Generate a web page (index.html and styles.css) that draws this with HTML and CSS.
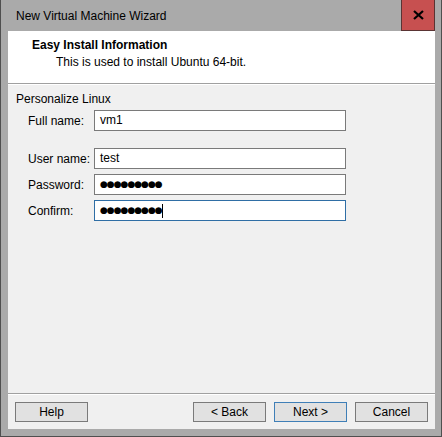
FILE: index.html
```html
<!DOCTYPE html>
<html lang="en">
<head>
<meta charset="utf-8">
<title>New Virtual Machine Wizard</title>
<link rel="stylesheet" href="styles.css">
</head>
<body>
<div class="window">
  <div class="titlebar">
    <span class="title">New Virtual Machine Wizard</span>
    <button class="close" aria-label="Close">
      <svg width="11" height="10" viewBox="0 0 11 10"><path d="M1 1 L10 9 M10 1 L1 9" stroke="#000" stroke-width="2.2" fill="none"/></svg>
    </button>
  </div>
  <div class="client">
    <div class="header">
      <div class="h-title">Easy Install Information</div>
      <div class="h-sub">This is used to install Ubuntu 64-bit.</div>
    </div>
    <div class="body">
      <div class="group-label">Personalize Linux</div>
      <div class="row">
        <span class="label">Full name:</span>
        <div class="field"><span>vm1</span></div>
      </div>
      <div class="row spaced">
        <span class="label">User name:</span>
        <div class="field"><span>test</span></div>
      </div>
      <div class="row">
        <span class="label">Password:</span>
        <div class="field dots"><span>●●●●●●●●●</span></div>
      </div>
      <div class="row">
        <span class="label">Confirm:</span>
        <div class="field dots focus"><span>●●●●●●●●●</span><span class="caret"></span></div>
      </div>
    </div>
    <div class="footer">
      <button class="btn">Help</button>
      <div class="spacer"></div>
      <button class="btn">&lt; Back</button>
      <button class="btn default">Next &gt;</button>
      <button class="btn">Cancel</button>
    </div>
  </div>
</div>
</body>
</html>
```
FILE: styles.css
```css
* { box-sizing: border-box; }
html, body { margin: 0; padding: 0; }
body {
  font-family: "Liberation Sans", Arial, sans-serif;
  font-size: 12px;
  color: #000;
  background: #ffffff;
}
.window {
  width: 442px;
  height: 437px;
  background: #aaaaaa;
  border: 1px solid #4f4f4f;
  border-top: none;
  display: flex;
  flex-direction: column;
}
.titlebar {
  height: 31px;
  display: flex;
  align-items: flex-start;
  justify-content: space-between;
  padding: 0 6px 0 15px;
  flex: none;
}
.title {
  font-size: 12px;
  line-height: 15px;
  padding-top: 9px;
  color: #000;
}
.close {
  width: 34px;
  height: 31px;
  margin: 0;
  padding: 0;
  background: #c75050;
  border: 1px solid #5a3434;
  border-top: none;
  display: flex;
  align-items: center;
  justify-content: center;
}
.client {
  flex: 1;
  margin: 0 6px 7px 7px;
  background: #f0f0f0;
  display: flex;
  flex-direction: column;
}
.header {
  height: 53px;
  background: #fff;
  border-bottom: 1px solid #a0a0a0;
  box-shadow: 0 1px 0 #fff;
  padding: 7px 0 0 24px;
  flex: none;
}
.h-title {
  font-weight: bold;
  line-height: 15px;
}
.h-sub {
  line-height: 15px;
  padding-left: 24px;
  margin-top: 2px;
}
.body {
  flex: 1;
  padding: 8px 0 0 8px;
  border-bottom: 1px solid #a0a0a0;
}
.group-label {
  line-height: 15px;
  margin-bottom: 3px;
}
.row {
  display: flex;
  align-items: center;
  height: 21px;
  margin-bottom: 5px;
  padding-left: 12px;
}
.row.spaced { margin-top: 17px; }
.label {
  width: 66px;
  flex: none;
}
.field {
  width: 252px;
  height: 21px;
  background: #fff;
  border: 1px solid #7a7a7a;
  padding: 0 5px;
  display: flex;
  align-items: center;
  line-height: 15px;
}
.field.focus { border-color: #2f6ea5; }
.dots span:first-child {
  font-family: "DejaVu Sans", sans-serif;
  font-size: 9px;
  letter-spacing: -1px;
}
.caret {
  width: 1px;
  height: 14px;
  background: #000;
  margin-left: 0;
}
.footer {
  height: 35px;
  flex: none;
  display: flex;
  align-items: flex-start;
  gap: 8px;
  padding: 7px 7px 0 7px;
  border-top: 1px solid #fff;
}
.spacer { flex: 1; }
.btn {
  width: 73px;
  height: 20px;
  margin: 0;
  padding: 0;
  background: #e1e1e1;
  border: 1px solid #7a7a7a;
  font-family: "Liberation Sans", Arial, sans-serif;
  font-size: 12px;
  color: #000;
}
.btn.default { border-color: #3f7fb7; }
```
